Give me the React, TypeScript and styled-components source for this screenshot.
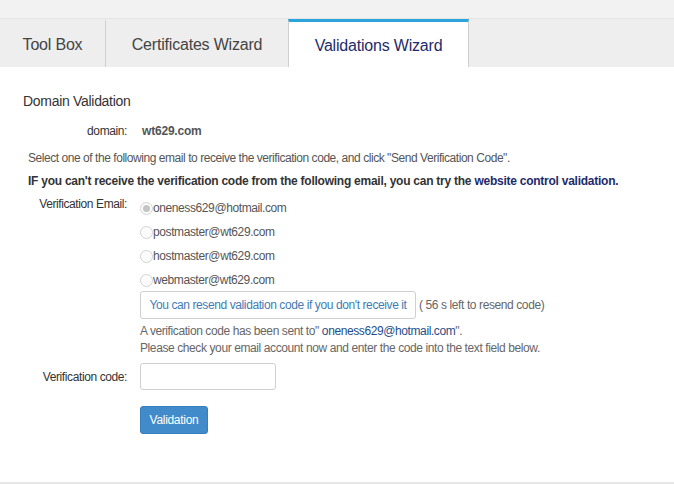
import React from "react";
import styled, { createGlobalStyle } from "styled-components";

const FONT = `"Liberation Sans", Arial, sans-serif`;

const Global = createGlobalStyle`
  html, body { margin: 0; padding: 0; background: #ffffff; }
  body { font-family: ${FONT}; color: #333; }
`;

const Page = styled.div`
  width: 674px;
  height: 484px;
  display: flex;
  flex-direction: column;
  background: #fff;
  overflow: hidden;
`;

const TopBar = styled.div`
  height: 18px;
  background: #f2f2f2;
  border-bottom: 1px solid #e4e4e4;
  flex: none;
`;

const TabBar = styled.div`
  display: flex;
  height: 48px;
  background: #eeeeee;
  flex: none;
`;

const Tab = styled.div<{ $active?: boolean; $w: number }>`
  box-sizing: border-box;
  width: ${(p) => p.$w}px;
  display: flex;
  align-items: center;
  justify-content: center;
  font-size: 16px;
  letter-spacing: -0.2px;
  color: ${(p) => (p.$active ? "#1e2b6a" : "#444")};
  background: ${(p) => (p.$active ? "#fff" : "transparent")};
  border-right: 1px solid #cfcfcf;
  border-left: ${(p) => (p.$active ? "1px solid #cfcfcf" : "none")};
  border-top: 3px solid ${(p) => (p.$active ? "#2ba3dc" : "transparent")};
  padding-top: ${(p) => (p.$active ? "2px" : "0")};
  margin-left: ${(p) => (p.$active ? "-1px" : "0")};
`;

const Content = styled.div`
  flex: 1;
  padding: 26px 0 0 23px;
  border-bottom: 2px solid #e6e6e6;
  font-size: 12px;
  letter-spacing: -0.4px;
`;

const Title = styled.div`
  font-size: 14px;
  letter-spacing: -0.3px;
  color: #333;
  margin-bottom: 14px;
`;

const Row = styled.div<{ $top?: number }>`
  display: grid;
  grid-template-columns: 104px 1fr;
  column-gap: 13px;
  align-items: start;
  margin-top: ${(p) => p.$top ?? 0}px;
`;

const Label = styled.div<{ $pt?: number }>`
  text-align: right;
  color: #333;
  padding-top: ${(p) => p.$pt ?? 0}px;
  line-height: 16px;
`;

const Domain = styled.div`
  font-weight: bold;
  color: #555;
  line-height: 16px;
  padding-left: 2px;
  letter-spacing: -0.2px;
`;

const Para = styled.div<{ $bold?: boolean; $top: number }>`
  margin: ${(p) => p.$top}px 0 0 5px;
  line-height: 16px;
  color: ${(p) => (p.$bold ? "#333" : "#555")};
  font-weight: ${(p) => (p.$bold ? "bold" : "normal")};
  letter-spacing: ${(p) => (p.$bold ? "-0.25px" : "-0.45px")};
  white-space: nowrap;
`;

const NavyLink = styled.span`
  color: #1e2b6a;
`;

const RadioList = styled.div`
  display: flex;
  flex-direction: column;
`;

const RadioItem = styled.div`
  display: flex;
  align-items: center;
  height: 24px;
  color: #555;
`;

const RadioDot = styled.span<{ $checked?: boolean }>`
  box-sizing: border-box;
  width: 13px;
  height: 13px;
  border-radius: 50%;
  border: 1px solid #d4d4d4;
  background: #fbfbfb;
  display: inline-flex;
  align-items: center;
  justify-content: center;
  flex: none;
  &::after {
    content: "";
    display: ${(p) => (p.$checked ? "block" : "none")};
    width: 7px;
    height: 7px;
    border-radius: 50%;
    background: #c4c4c4;
  }
`;

const ResendRow = styled.div`
  display: flex;
  align-items: center;
  gap: 3px;
  margin-top: -1px;
`;

const ResendButton = styled.button`
  box-sizing: border-box;
  height: 28px;
  width: 276px;
  border: 1px solid #d0d0d0;
  border-radius: 3px;
  background: #fff;
  color: #3f7cb3;
  font-family: ${FONT};
  font-size: 12px;
  letter-spacing: -0.4px;
  white-space: nowrap;
  padding: 0 8px;
  cursor: pointer;
`;

const Muted = styled.span`
  color: #666;
`;

const SentInfo = styled.div`
  margin-top: 4px;
  color: #666;
  line-height: 17px;
`;

const Email = styled.span`
  color: #1f4e89;
`;

const Input = styled.input`
  box-sizing: border-box;
  width: 136px;
  height: 27px;
  border: 1px solid #cfcfcf;
  border-radius: 3px;
  padding: 0 6px;
  font-family: ${FONT};
  font-size: 12px;
  outline: none;
`;

const PrimaryButton = styled.button`
  box-sizing: border-box;
  height: 28px;
  width: 68px;
  border: 1px solid #357ebd;
  border-radius: 3px;
  background: #428bca;
  color: #fff;
  font-family: ${FONT};
  font-size: 12px;
  letter-spacing: -0.3px;
  padding: 0;
  cursor: pointer;
`;

const emails = [
  "oneness629@hotmail.com",
  "postmaster@wt629.com",
  "hostmaster@wt629.com",
  "webmaster@wt629.com",
];

export default function App() {
  return (
    <Page>
      <Global />
      <TopBar />
      <TabBar>
        <Tab $w={106}>Tool Box</Tab>
        <Tab $w={183}>Certificates Wizard</Tab>
        <Tab $w={181} $active>
          Validations Wizard
        </Tab>
      </TabBar>
      <Content>
        <Title>Domain Validation</Title>
        <Row>
          <Label>domain:</Label>
          <Domain>wt629.com</Domain>
        </Row>
        <Para $top={11}>
          Select one of the following email to receive the verification code, and click "Send Verification Code".
        </Para>
        <Para $top={7} $bold>
          IF you can't receive the verification code from the following email, you can try the{" "}
          <NavyLink>website control validation.</NavyLink>
        </Para>
        <Row $top={7}>
          <Label>Verification Email:</Label>
          <div>
            <RadioList>
              {emails.map((e, i) => (
                <RadioItem key={e}>
                  <RadioDot $checked={i === 0} />
                  {e}
                </RadioItem>
              ))}
            </RadioList>
            <ResendRow>
              <ResendButton>You can resend validation code if you don't receive it</ResendButton>
              <Muted>( 56 s left to resend code)</Muted>
            </ResendRow>
            <SentInfo>
              A verification code has been sent to" <Email>oneness629@hotmail.com</Email>".
              <br />
              Please check your email account now and enter the code into the text field below.
            </SentInfo>
          </div>
        </Row>
        <Row $top={6}>
          <Label $pt={6}>Verification code:</Label>
          <Input />
        </Row>
        <Row $top={16}>
          <span />
          <div>
            <PrimaryButton>Validation</PrimaryButton>
          </div>
        </Row>
      </Content>
    </Page>
  );
}
